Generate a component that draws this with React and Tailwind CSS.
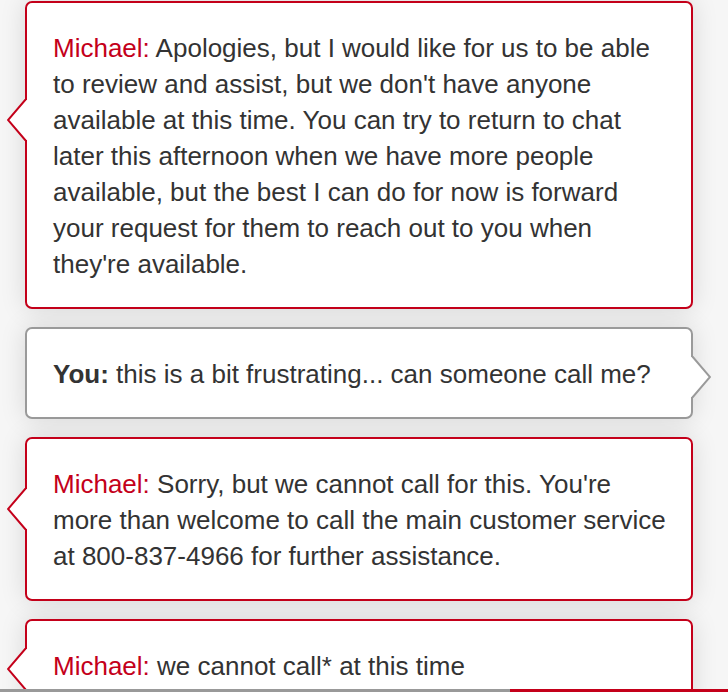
const RED = '#c4001a';

// small pointer drawn on the side of a chat bubble
const Tail = ({ side, top, color }) => {
  const left = side === 'left';
  return (
    <svg
      width="24"
      height="42"
      viewBox="0 0 24 42"
      className={`absolute ${left ? 'left-[-20px]' : 'right-[-20px] -scale-x-100'}`}
      style={{ top }}
    >
      <polygon points="19,1 1,21 19,41 24,41 24,1" fill="#fff" />
      <polyline points="19,0 1,21 19,42" fill="none" stroke={color} strokeWidth="2" />
    </svg>
  );
};

const Bubble = ({ agent, tailTop, children }) => {
  const color = agent ? RED : '#9a9a9a';
  return (
    <div
      className="relative bg-white rounded-[7px] border-2 px-[26px] pt-[27px] pb-[25px] shadow-[0_0_26px_rgba(0,0,0,0.13)]"
      style={{ borderColor: color }}
    >
      <Tail side={agent ? 'left' : 'right'} top={tailTop} color={color} />
      <p className="text-[26px] leading-[36px] text-[#333] whitespace-nowrap">{children}</p>
    </div>
  );
};

export default function App() {
  return (
    <div
      className="h-[692px] w-[728px] overflow-hidden flex flex-col bg-[#f6f6f6]"
      style={{ fontFamily: '"Liberation Sans", Arial, sans-serif' }}
    >
      <div className="flex-1 overflow-hidden pl-[25px] pr-[35px] pt-[1px] flex flex-col gap-[18px]">
        <Bubble agent tailTop={96}>
          <span className="text-[#c4001a]">Michael:</span> Apologies, but I would like for us to be able
          <br />
          to review and assist, but we don't have anyone
          <br />
          available at this time. You can try to return to chat
          <br />
          later this afternoon when we have more people
          <br />
          available, but the best I can do for now is forward
          <br />
          your request for them to reach out to you when
          <br />
          they're available.
        </Bubble>

        <Bubble tailTop={27}>
          <b className="font-bold">You:</b> this is a bit frustrating... can someone call me?
        </Bubble>

        <Bubble agent tailTop={49}>
          <span className="text-[#c4001a]">Michael:</span> Sorry, but we cannot call for this. You're
          <br />
          more than welcome to call the main customer service
          <br />
          at 800-837-4966 for further assistance.
        </Bubble>

        <Bubble agent tailTop={27}>
          <span className="text-[#c4001a]">Michael:</span> we cannot call* at this time
        </Bubble>
      </div>

      {/* footer edge */}
      <div className="flex h-[3px] shrink-0">
        <div className="w-[510px] bg-[#999]" />
        <div className="flex-1 bg-[#c4001a]" />
      </div>
    </div>
  );
}
